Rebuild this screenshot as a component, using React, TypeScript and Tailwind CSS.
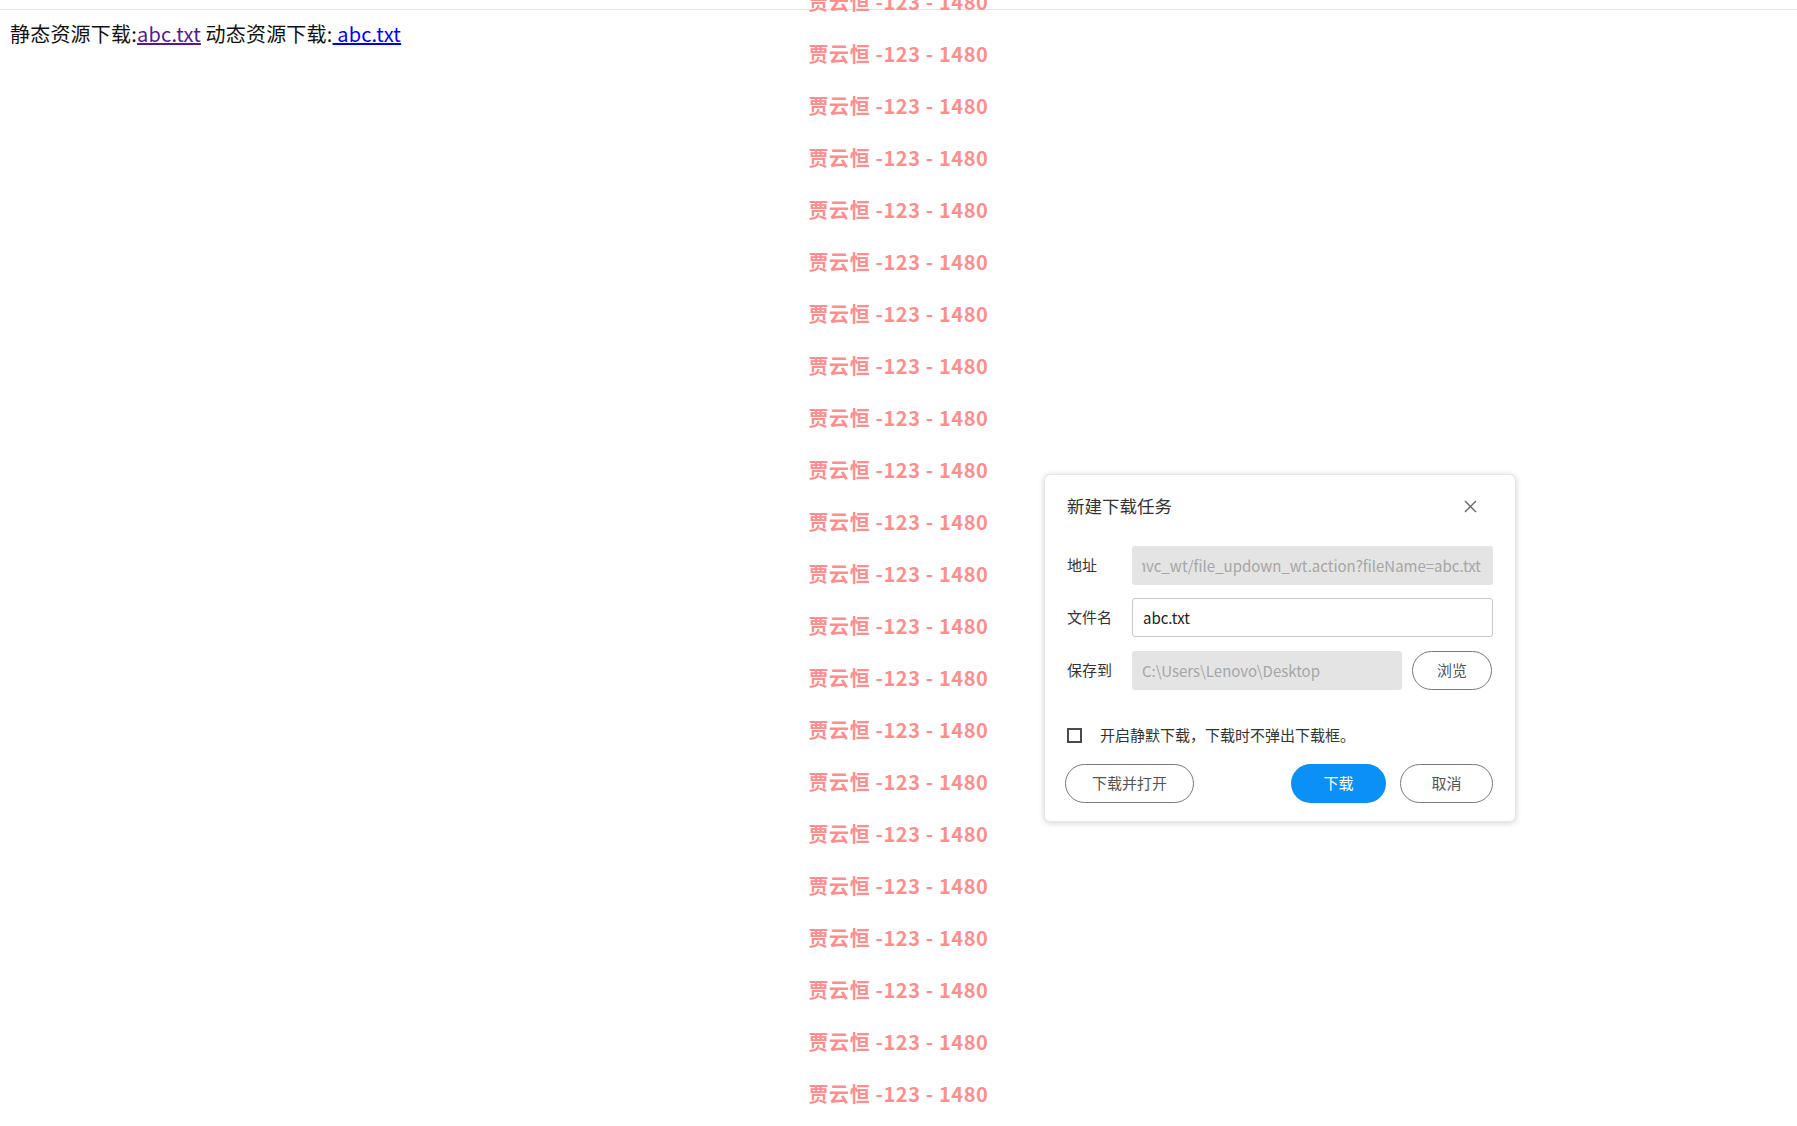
import React from "react";

const FONT = '"Noto Sans CJK SC", "Noto Sans", sans-serif';

function Watermark() {
  const rows = Array.from({ length: 22 });
  return (
    <div className="pointer-events-none absolute inset-x-0 top-[-24px] flex flex-col items-center">
      {rows.map((_, i) => (
        <div key={i} className="h-[52px] text-[20px] font-bold leading-[52px] tracking-[0.6px] text-[#ff8f8f]">
          贾云恒 -123 - 1480
        </div>
      ))}
    </div>
  );
}

function Label({ children }: { children: React.ReactNode }) {
  return <div className="w-[65px] shrink-0 text-[15px] text-[#333]">{children}</div>;
}

function Dialog() {
  return (
    <div className="absolute left-[1044px] top-[474px] w-[472px] rounded-[6px] border border-[#e6e6e6] bg-white px-[22px] pb-[18px] pt-[19px] shadow-[0_1px_6px_rgba(0,0,0,0.18)]">
      <div className="flex h-[24px] items-center justify-between">
        <div className="text-[17.5px] text-[#333]">新建下载任务</div>
        <svg className="mr-[16px]" width="13" height="13" viewBox="0 0 13 13">
          <path d="M1 1L12 12M12 1L1 12" stroke="#666" strokeWidth="1.4" fill="none" />
        </svg>
      </div>

      <div className="mt-[28px] flex items-center">
        <Label>地址</Label>
        <div className="flex h-[39px] min-w-0 flex-1 items-center rounded-[3px] bg-[#e4e4e4] pl-[10px] pr-[12px] pt-[1px]">
          <div className="flex min-w-0 flex-1 justify-end overflow-hidden whitespace-nowrap text-[15px] text-[#a6a6a6]">
            <span className="shrink-0">springmvc_wt/file_updown_wt.action?fileName=abc.txt</span>
          </div>
        </div>
      </div>

      <div className="mt-[13px] flex items-center">
        <Label>文件名</Label>
        <div className="flex h-[39px] flex-1 items-center rounded-[3px] border border-[#c8c8c8] bg-white px-[10px] pt-[1px] text-[15px] text-[#222]">
          abc.txt
        </div>
      </div>

      <div className="mt-[14px] flex items-center">
        <Label>保存到</Label>
        <div className="flex h-[39px] w-[270px] items-center rounded-[3px] bg-[#e4e4e4] px-[10px] pt-[1px] text-[15px] text-[#a6a6a6]">
          C:\Users\Lenovo\Desktop
        </div>
        <div className="ml-[10px] flex h-[39px] w-[80px] items-center justify-center rounded-full border border-[#7a7a7a] text-[15px] text-[#555]">
          浏览
        </div>
      </div>

      <div className="mt-[38px] flex h-[15px] items-center">
        <div className="h-[15px] w-[15px] shrink-0 border-2 border-[#4a4a4a]" />
        <div className="ml-[18px] text-[15px] text-[#333]">开启静默下载，下载时不弹出下载框。</div>
      </div>

      <div className="mt-[21px] flex items-center justify-between">
        <div className="-ml-[2px] flex h-[39px] w-[129px] items-center justify-center rounded-full border border-[#7a7a7a] text-[15px] text-[#555]">
          下载并打开
        </div>
        <div className="flex items-center gap-[14px]">
          <div className="flex h-[39px] w-[95px] items-center justify-center rounded-full bg-[#0a90f6] text-[15px] text-white">
            下载
          </div>
          <div className="flex h-[39px] w-[93px] items-center justify-center rounded-full border border-[#7a7a7a] text-[15px] text-[#555]">
            取消
          </div>
        </div>
      </div>
    </div>
  );
}

export default function App() {
  return (
    <div className="relative h-[1126px] w-full overflow-hidden bg-white" style={{ fontFamily: FONT }}>
      <div className="h-[10px] border-b border-[#e3e3e3]" />
      <div className="mt-[10px] pl-[10px] text-[20px] leading-[28px] tracking-[0.2px] text-[#111]">
        静态资源下载:<a className="text-[#551a8b] underline">abc.txt</a> 动态资源下载:
        <a className="text-[#0000ee] underline"> abc.txt</a>
      </div>
      <Watermark />
      <Dialog />
    </div>
  );
}
